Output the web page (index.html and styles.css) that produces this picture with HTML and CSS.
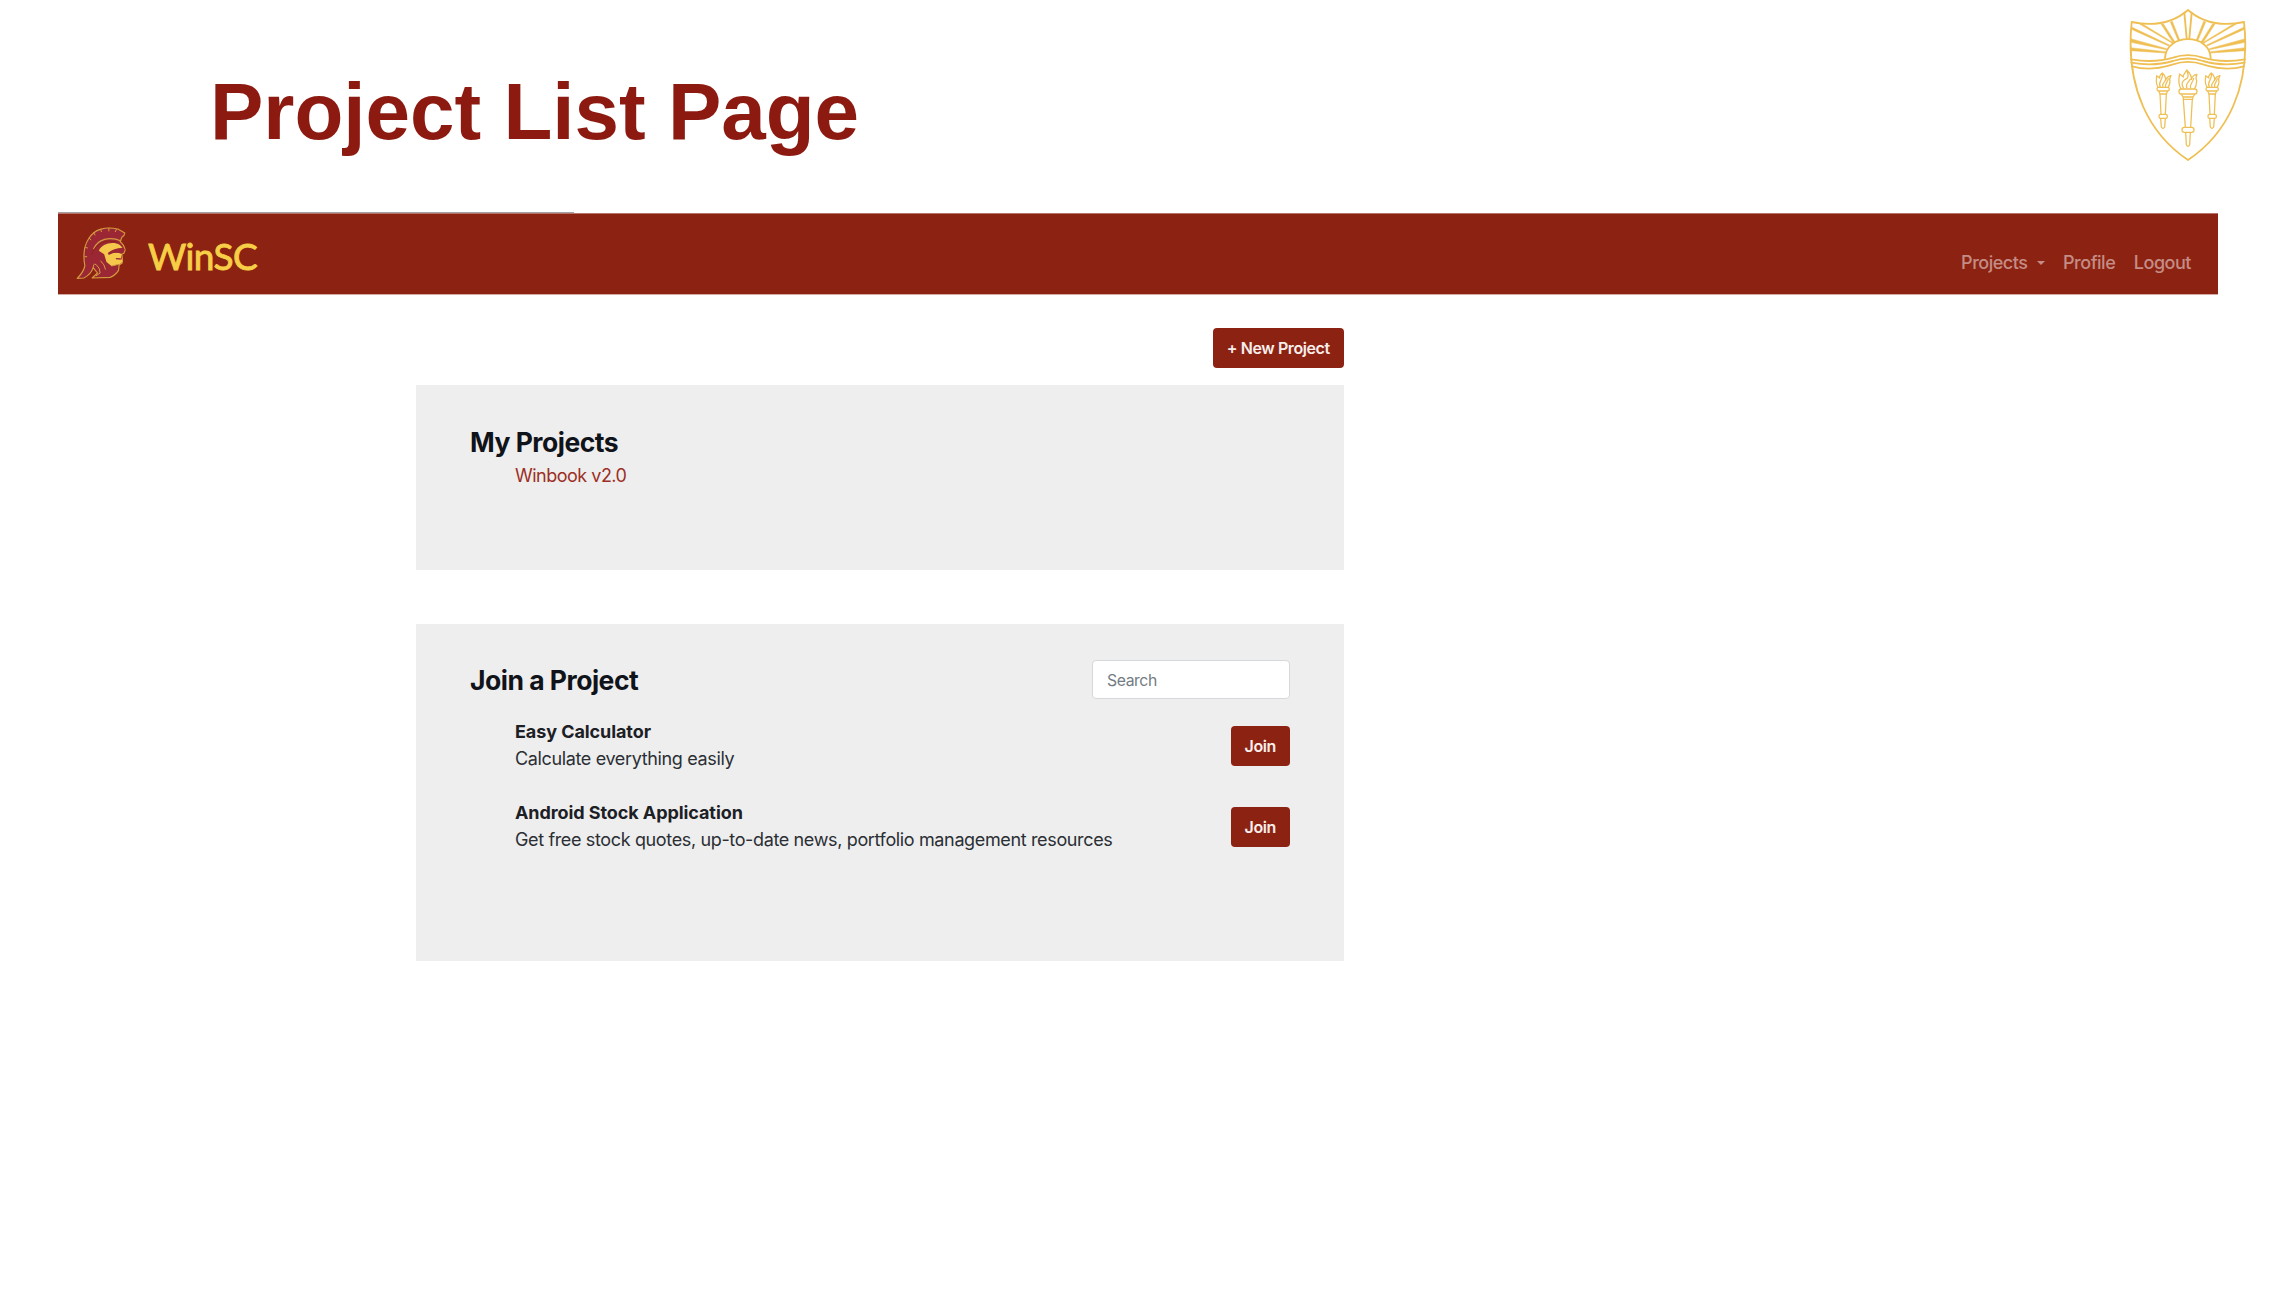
FILE: index.html
```html
<!DOCTYPE html>
<html lang="en">
<head>
<meta charset="utf-8">
<title>Project List Page</title>
<link rel="stylesheet" href="styles.css">
</head>
<body>
<header class="slide-header">
  <h1 class="slide-title">Project List Page</h1>
  <svg class="shield" viewBox="55 24 360 462" aria-hidden="true">
    <g fill="none" stroke="#efbf53" stroke-width="5.5" stroke-linejoin="round" stroke-linecap="round">
      <path d="M66 66Q170 87 235 30Q300 87 403 66C425 265 350 403 235 480C120 403 46 265 66 66Z"/>
      <path d="M166 175C168 98 302 98 303 175"/>
      <path d="M64 178C120 188 160 182 190 173Q235 158 280 173C310 182 350 188 406 178"/>
      <path d="M65 188C120 198 160 192 190 183Q235 168 280 183C310 192 350 198 405 188"/>
      <path d="M67 199C120 213 160 202 190 193Q235 178 280 193C310 202 350 213 403 199"/>
      <path d="M224 38L231 115M246 38L239 115"/>
    </g>
    <g fill="#efbf53" stroke="#efbf53" stroke-width="1.5">
      <path d="M154 72L161 71L196 126L191 129ZM182 66L188 64L210 119L205 121ZM66 81L68 89L177 138L179 135ZM91 73L100 73L191 128L188 130ZM63 116L64 127L170 149L171 146ZM62 143V152L167 159V155Z"/>
      <path d="M316 72L309 71L274 126L279 129ZM288 66L282 64L260 119L265 121ZM404 81L402 89L293 138L291 135ZM379 73L370 73L279 128L282 130ZM407 116L406 127L300 149L299 146ZM408 143V152L303 159V155Z"/>
    </g>
    <g fill="none" stroke="#efbf53" stroke-width="3.8" stroke-linejoin="round">
      <path d="M221 298L227 382M248 298L243 382M228 397L230 434Q235 444 240 434L242 397"/>
      <rect x="208" y="267" width="54" height="15" rx="7"/><path d="M214 282L221 292V298H249V292L256 282M221 291H249"/>
      <rect x="217" y="382" width="36" height="15" rx="7"/>
      <path d="M214 267C203 249 208 233 210 222L221 231C218 225 227 220 231 210Q247 225 245 239Q249 224 262 223Q257 235 261 242Q261 257 254 267M222 265C211 247 222 240 232 235C240 227 233 219 231 210M232 265C225 250 239 246 242 237M243 265C238 252 251 248 252 234"/>
      <g id="torch">
        <path d="M151 282L154 343M170 282L167 343M153 355L155 381Q160 389 165 381L167 355"/>
        <rect x="142" y="262" width="37" height="11" rx="5"/><path d="M147 273L151 282H170L174 273"/>
        <rect x="148" y="343" width="25" height="12" rx="5"/>
        <path d="M146 262C136 250 141 239 141 227L150 234Q149 226 158 219Q169 229 168 241Q171 230 184 227Q178 237 181 244Q181 255 175 262M152 261C143 247 159 243 159 221M160 261C154 250 167 248 167 239M168 261C164 251 176 246 176 235"/>
      </g>
      <use href="#torch" x="147"/>
    </g>
  </svg>
</header>
<nav class="navbar">
  <a class="brand">
    <svg class="trojan" viewBox="6 6 152 162" aria-hidden="true">
      <path d="M9 163Q27 146 32 126C27 97 29 66 43 45C60 14 96 7 131 15L152 27Q151 36 143 40L138 53Q150 62 153 78L149 88L143 91L145 108L144 117L135 123L133 139Q124 154 108 160L54 162L70 147L57 131Q50 152 29 162Z" fill="#9b2735" stroke="#d39a3e" stroke-width="3.5" stroke-linejoin="round"/>
      <path d="M74 80C82 60 116 50 137 63L145 71Q118 72 102 86L108 90Q126 82 143 90L140 101L145 113L136 121L112 126L97 114L90 91Z" fill="#f5c84c"/>
      <path d="M101 88Q120 74 151 75Q151 86 141 86Q120 82 104 93Z" fill="#9b2735"/>
      <path d="M58 76C70 44 108 37 141 51" fill="none" stroke="#d39a3e" stroke-width="4"/>
      <path d="M53 92C62 58 98 44 129 55" fill="none" stroke="#8c2312" stroke-width="3"/>
      <path d="M57 131Q58 108 75 133L78 147L65 156M79 110Q92 122 94 137M112 126L133 121" fill="none" stroke="#d39a3e" stroke-width="3"/>
      <path d="M125 104L140 105" stroke="#9b2735" stroke-width="4"/>
      <path d="M44 42L51 48M58 25L63 34M79 15L82 24M104 11V22M127 15L123 24M33 70L41 72M31 98L39 98" stroke="#d39a3e" stroke-width="3"/>
    </svg>
    <span class="brand-name">WinSC</span>
  </a>
  <div class="nav-links">
    <a class="nav-link">Projects<i class="caret"></i></a>
    <a class="nav-link">Profile</a>
    <a class="nav-link">Logout</a>
  </div>
</nav>
<main class="content">
  <div class="toolbar"><button class="btn btn-new">+ New Project</button></div>
  <section class="panel panel-mine">
    <h2 class="panel-title">My Projects</h2>
    <a class="project-link">Winbook v2.0</a>
  </section>
  <section class="panel panel-join">
    <div class="panel-head">
      <h2 class="panel-title">Join a Project</h2>
      <div class="search">Search</div>
    </div>
    <div class="project-list">
      <article class="project">
        <div class="project-text">
          <h3 class="project-name">Easy Calculator</h3>
          <p class="project-desc">Calculate everything easily</p>
        </div>
        <button class="btn">Join</button>
      </article>
      <article class="project">
        <div class="project-text">
          <h3 class="project-name">Android Stock Application</h3>
          <p class="project-desc">Get free stock quotes, up-to-date news, portfolio management resources</p>
        </div>
        <button class="btn">Join</button>
      </article>
    </div>
  </section>
</main>
</body>
</html>
```
FILE: styles.css
```css
* { box-sizing: border-box; }
body { margin: 0; background: #fff; color: #2b2f34; font: 18px/27px Inter, "Liberation Sans", sans-serif; }
h1, h2, h3, p { margin: 0; }

.slide-header { height: 212px; display: flex; justify-content: space-between; align-items: flex-start; padding: 8px 38px 0 210px; }
.slide-title { padding-top: 58px; font: bold 80px/92px "Liberation Sans", Arial, sans-serif; color: #8c1a11; }
.shield { width: 120px; height: 154px; }

.navbar {
  margin: 0 68px 0 58px;
  height: 83px;
  display: flex;
  justify-content: space-between;
  padding: 1px 27px 0 18px;
  background:
    linear-gradient(#a5a09f, #a5a09f) 0 0 / 516px 1px no-repeat,
    linear-gradient(#b5736a, #b5736a) 0 1px / 100% 1px no-repeat,
    linear-gradient(#d3aaa4, #d3aaa4) 0 100% / 100% 1px no-repeat,
    linear-gradient(#8c2312, #8c2312) 0 2px / 100% 80px no-repeat;
}
.brand { display: flex; gap: 21px; align-items: flex-start; }
.trojan { width: 51px; height: 54px; margin-top: 13px; }
.brand-name { margin-top: 20px; font: 37px/46px Lato, sans-serif; letter-spacing: -0.6px; color: #f7cf46; -webkit-text-stroke: 0.9px #f7cf46; }
.nav-links { display: flex; gap: 18.5px; height: 63px; padding-top: 36px; color: #c58c85; font-weight: 500; letter-spacing: -0.47px; }
.nav-link { display: flex; align-items: center; }
.caret { margin-left: 9px; border: 4.5px solid transparent; border-top-color: currentColor; border-bottom: 0; }

.content { width: 928px; margin-left: 416px; padding-top: 33px; }
.toolbar { display: flex; justify-content: flex-end; align-items: flex-start; height: 57px; }
.btn { width: 59.5px; height: 39.5px; padding: 0; border: 0; border-radius: 4px; background: #8c2312; color: #f8eeec; font: 600 16px/24px Inter, sans-serif; letter-spacing: -0.4px; }
.btn-new { width: 131.5px; }

.panel { background: #eee; padding: 0 54px; }
.panel-mine { height: 185px; padding-top: 41px; }
.panel-join { margin-top: 54px; height: 336.5px; padding-top: 36px; }
.panel-title { font-size: 26.5px; line-height: 33px; font-weight: 700; letter-spacing: -0.5px; color: #10141a; }
.project-link { display: block; padding: 3px 0 0 45px; letter-spacing: -0.5px; color: #9c2f24; }
.panel-head { display: flex; justify-content: space-between; align-items: center; height: 39px; }
.panel-head .panel-title { padding-top: 2px; }
.search { width: 198px; height: 39.5px; padding: 6px 14px; border: 1px solid #d5d9dd; border-radius: 4px; background: #fff; font-size: 15.75px; letter-spacing: -0.4px; color: #737b83; }
.project-list { padding-top: 6.5px; }
.project { display: flex; justify-content: space-between; align-items: center; height: 81px; padding-left: 45px; }
.project-text { padding-bottom: 2px; }
.project-name { font-size: 18px; font-weight: 700; letter-spacing: -0.08px; color: #1c2025; }
.project-desc { letter-spacing: -0.36px; }
```
